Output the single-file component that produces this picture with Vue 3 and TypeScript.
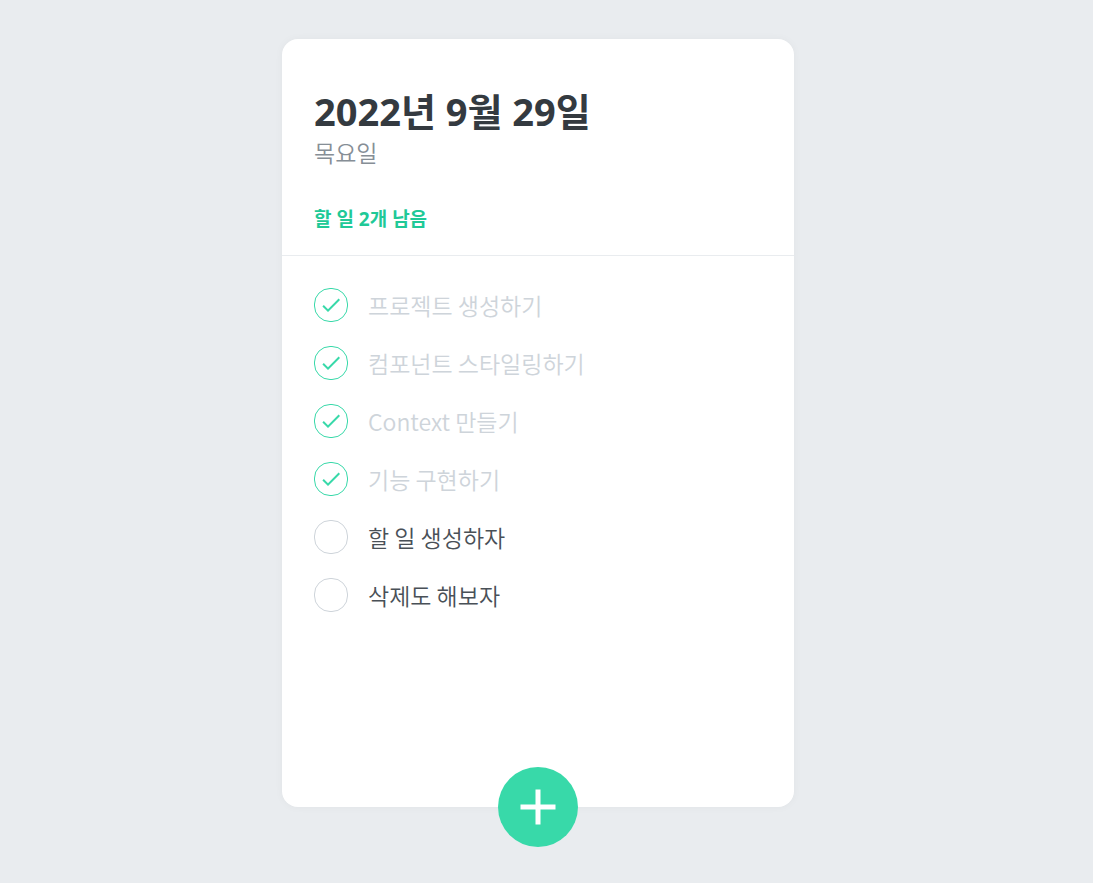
<script setup lang="ts">
import { computed, ref } from 'vue'

interface Todo {
  id: number
  text: string
  done: boolean
}

const todos = ref<Todo[]>([
  { id: 1, text: '프로젝트 생성하기', done: true },
  { id: 2, text: '컴포넌트 스타일링하기', done: true },
  { id: 3, text: 'Context 만들기', done: true },
  { id: 4, text: '기능 구현하기', done: true },
  { id: 5, text: '할 일 생성하자', done: false },
  { id: 6, text: '삭제도 해보자', done: false },
])

const remaining = computed(() => todos.value.filter((todo) => !todo.done).length)
</script>

<template>
  <div class="page">
    <main class="card">
      <header class="head">
        <h1 class="date">2022년 9월 29일</h1>
        <p class="day">목요일</p>
        <p class="left">할 일 {{ remaining }}개 남음</p>
      </header>
      <ul class="list">
        <li v-for="todo in todos" :key="todo.id">
          <label class="item" :for="`todo-${todo.id}`">
            <span class="check">
              <input :id="`todo-${todo.id}`" v-model="todo.done" class="box" type="checkbox" />
              <svg v-if="todo.done" class="tick" viewBox="0 0 24 24" aria-hidden="true">
                <path d="M9 16.2L4.8 12l-1.4 1.4L9 19 21 7l-1.4-1.4L9 16.2z" />
              </svg>
            </span>
            <span class="text" :class="{ done: todo.done }">{{ todo.text }}</span>
          </label>
        </li>
      </ul>
      <button class="add" type="button" aria-label="할 일 추가">
        <svg class="plus" viewBox="0 0 24 24" aria-hidden="true">
          <path d="M19 13h-6v6h-2v-6H5v-2h6V5h2v6h6v2z" />
        </svg>
      </button>
    </main>
  </div>
</template>

<style>
body {
  margin: 0;
  background: #e9ecef;
}
</style>

<style scoped>
.page {
  box-sizing: border-box;
  min-height: 100vh;
  padding: 39px 17px 76px 0;
  background: #e9ecef;
  font-family: "Noto Sans", "Noto Sans CJK KR", sans-serif;
}

.card {
  position: relative;
  display: flex;
  flex-direction: column;
  box-sizing: border-box;
  width: 100%;
  max-width: 512px;
  min-height: 768px;
  margin: 0 auto;
  border-radius: 16px;
  background: #fff;
  box-shadow: 0 0 8px rgba(0, 0, 0, 0.04);
}

.head {
  padding: 48px 32px 24px;
  border-bottom: 1px solid #e9ecef;
}

.date {
  margin: 0;
  color: #343a40;
  font-size: 38px;
  font-weight: 700;
  line-height: 48px;
}

.day {
  margin: 4px 0 0;
  color: #868e96;
  font-size: 23px;
  font-weight: 350;
  line-height: 28px;
}

.left {
  margin: 40px 0 0;
  color: #20c997;
  font-size: 19px;
  font-weight: 700;
  line-height: 24px;
}

.list {
  flex: 1;
  margin: 0;
  padding: 20px 32px 48px;
  list-style: none;
}

.item {
  display: flex;
  align-items: center;
  gap: 20px;
  padding: 12px 0;
  cursor: pointer;
}

.check {
  display: grid;
  flex: none;
  place-items: center;
}

.box,
.tick {
  grid-area: 1 / 1;
}

.box {
  appearance: none;
  box-sizing: border-box;
  width: 34px;
  height: 34px;
  margin: 0;
  border: 1px solid #ced4da;
  border-radius: 16px;
  cursor: pointer;
}

.box:checked {
  border-color: #38d9a9;
}

.tick {
  width: 24px;
  height: 24px;
  fill: #38d9a9;
  pointer-events: none;
}

.text {
  color: #495057;
  font-family: "Noto Sans CJK KR", sans-serif;
  font-size: 23px;
  font-weight: 350;
  line-height: 34px;
}

.text.done {
  color: #ced4da;
}

.add {
  position: absolute;
  bottom: -40px;
  left: 50%;
  display: flex;
  align-items: center;
  justify-content: center;
  width: 80px;
  height: 80px;
  padding: 0;
  transform: translateX(-50%);
  border: 0;
  border-radius: 50%;
  background: #38d9a9;
  cursor: pointer;
}

.plus {
  width: 60px;
  height: 60px;
  fill: #fff;
}
</style>
